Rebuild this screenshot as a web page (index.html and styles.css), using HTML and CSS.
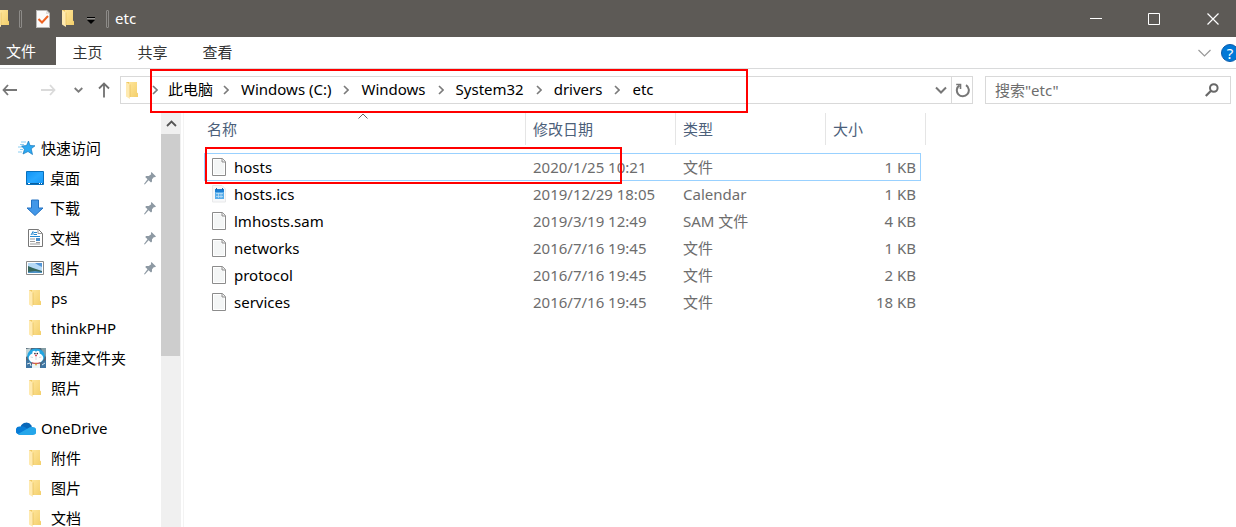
FILE: index.html
```
<!DOCTYPE html>
<html lang="zh-CN">
<head>
<meta charset="utf-8">
<title>etc</title>
<link rel="stylesheet" href="styles.css">
</head>
<body>
<svg class="defs" aria-hidden="true">
  <defs>
    <linearGradient id="gold" x1="0" y1="0" x2="1" y2="1"><stop offset="0" stop-color="#ffe59a"/><stop offset="1" stop-color="#f3cf6b"/></linearGradient>
    <linearGradient id="blue" x1="0" y1="0" x2="1" y2="1"><stop offset="0" stop-color="#0f93f5"/><stop offset=".5" stop-color="#28a8ff"/><stop offset="1" stop-color="#1597f8"/></linearGradient>
    <symbol id="folder" viewBox="0 0 12 17"><path d="M1 0H11V11L12 12V15H4L0 14V0Z" fill="#eec760"/><path d="M3 0H11V10.500L12 11.500V15H3Z" fill="url(#gold)"/><path d="M0 0L4 2.500V17L0 14.500Z" fill="#ffeab0"/><path d="M4 2.500V15" stroke="#e5bd59" stroke-width=".7"/></symbol>
    <symbol id="pin" viewBox="0 0 12 13"><path d="M7.500 0L12 4.500L10.800 5.200L10 4.900L8 7.300L8 9.600L7 10.500L4.600 8.300L.8 12.500L0 12L3.500 7.200L1.200 5L2.200 4L4.800 4.100L7.200 2.200L6.900 1Z" fill="#8d99a3"/></symbol>
    <symbol id="file" viewBox="0 0 14 18"><path d="M.5.5H10.500L13.500 3.500V17.500H.5Z" fill="#fff" stroke="#8c8c8c"/><path d="M2 2H9.500V5H12V16H2Z" fill="#f4f6f6"/><path d="M10 .5V4H13.500" fill="#eee" stroke="#8c8c8c"/></symbol>
    <symbol id="next" viewBox="0 0 6 10"><path d="M1 1L5 5L1 9" fill="none" stroke="#7b7b7b" stroke-width="1.600"/></symbol>
    <symbol id="down" viewBox="0 0 12 8"><path d="M1 1.500L6 6.500L11 1.500" fill="none" stroke="currentColor" stroke-width="2"/></symbol>
  </defs>
</svg>
<div class="window">
  <header class="titlebar">
    <svg class="folder-cut" viewBox="3 0 9 17"><use href="#folder" width="12" height="17"/></svg>
    <span class="grip"></span>
    <button class="tool check" aria-label="属性"><svg width="14" height="18" viewBox="0 0 14 18"><path d="M0 0H11L14 3V18H0Z" fill="#b9b7b5"/><path d="M1 1H10.500L13 3.500V17H1Z" fill="#fbfbfb"/><path d="M10 1V4H13" fill="#ddd"/><path d="M2.500 9L6 12.500L12 6" fill="none" stroke="#ee6424" stroke-width="2"/></svg></button>
    <button class="tool new" aria-label="新建文件夹"><svg width="12" height="17"><use href="#folder"/></svg></button>
    <button class="tool more" aria-label="自定义"><svg width="8" height="7" viewBox="0 0 8 7"><path d="M0 .5H8" stroke="#000"/><path d="M0 1.500H8" stroke="#bbb" stroke-width=".6"/><path d="M0 3H8L4 7Z" fill="#000"/></svg></button>
    <span class="grip"></span>
    <span class="title">etc</span>
    <div class="controls">
      <button aria-label="最小化"><svg width="12" height="12" viewBox="0 0 12 12"><path d="M0 5.500H12" stroke="#fff"/></svg></button>
      <button aria-label="最大化"><svg width="12" height="12" viewBox="0 0 12 12"><path d="M.5.5H11.500V11.500H.5Z" fill="none" stroke="#fff"/></svg></button>
      <button aria-label="关闭"><svg width="12" height="12" viewBox="0 0 12 12"><path d="M.5.5L11.500 11.500M11.500.5L.5 11.500" stroke="#fff" stroke-width="1.200"/></svg></button>
    </div>
  </header>
  <nav class="ribbon" aria-label="功能区">
    <button class="tab active">文件</button>
    <button class="tab">主页</button>
    <button class="tab">共享</button>
    <button class="tab">查看</button>
    <div class="ribbon-end">
      <button aria-label="展开功能区"><svg width="13" height="8" viewBox="0 0 13 8"><path d="M.5 1L6.500 7L12.500 1" fill="none" stroke="#999" stroke-width="1.200"/></svg></button>
      <button class="help" aria-label="帮助">?</button>
    </div>
  </nav>
  <div class="navbar">
    <div class="history">
      <button aria-label="后退"><svg width="16" height="12" viewBox="0 0 16 12"><path d="M6 1L1.500 6L6 11M1.500 6H15" fill="none" stroke="#777" stroke-width="1.800"/></svg></button>
      <button aria-label="前进"><svg width="16" height="12" viewBox="0 0 16 12"><path d="M10 1L14.500 6L10 11M14.500 6H1" fill="none" stroke="#dadada" stroke-width="1.800"/></svg></button>
      <button class="recent" aria-label="最近的位置"><svg width="9" height="6" viewBox="0 0 9 6"><path d="M.7 1L4.500 4.700L8.300 1" fill="none" stroke="#7b7b7b" stroke-width="1.800"/></svg></button>
      <button aria-label="上移"><svg width="12" height="16" viewBox="0 0 12 16"><path d="M1 6.500L6 1.500L11 6.500M6 1.500V15.500" fill="none" stroke="#707070" stroke-width="1.800"/></svg></button>
    </div>
    <div class="address">
      <svg class="addr-folder" width="12" height="17"><use href="#folder"/></svg>
      <svg width="6" height="10"><use href="#next"/></svg>
      <a class="first" href="#pc">此电脑</a><svg width="6" height="10"><use href="#next"/></svg>
      <a href="#c">Windows (C:)</a><svg width="6" height="10"><use href="#next"/></svg>
      <a href="#windows">Windows</a><svg width="6" height="10"><use href="#next"/></svg>
      <a href="#system32">System32</a><svg width="6" height="10"><use href="#next"/></svg>
      <a href="#drivers">drivers</a><svg width="6" height="10"><use href="#next"/></svg>
      <a href="#etc">etc</a>
      <div class="address-end">
        <button class="drop" aria-label="以前的位置"><svg width="12" height="8"><use href="#down"/></svg></button>
        <button class="refresh" aria-label="刷新"><svg width="15" height="15" viewBox="0 0 15 15"><path d="M11 2.200A6 6 0 1 1 4.500 2.300" fill="none" stroke="#777" stroke-width="2"/><path d="M1.200 1.500H5.500V6" fill="none" stroke="#777" stroke-width="1.600"/></svg></button>
      </div>
      <span class="mark mark-path"></span>
    </div>
    <form class="search">
      <input type="text" aria-label="搜索" placeholder='搜索"etc"'>
      <button type="button" aria-label="搜索"><svg width="14" height="14" viewBox="0 0 14 14"><circle cx="8.800" cy="5" r="3.800" fill="none" stroke="#686868" stroke-width="2"/><path d="M6 7.800L.8 13" stroke="#686868" stroke-width="2.200"/></svg></button>
    </form>
  </div>
  <div class="content">
    <nav class="sidebar" aria-label="导航窗格">
      <a class="root" href="#quick"><svg width="18" height="16" viewBox="0 0 18 16"><path d="M10.500 1L12 5.500L17 5.800L13.200 8.800L14.500 14.500L10 11.500L5 14L6.500 9.200L3.500 6L8.500 5.600Z" fill="#2da9f2" stroke="#1579bd" stroke-width=".7"/><path d="M3 2H8M2 4.500H6M0 7H4M2 9.500H5M0 12H4" stroke="#6cc2ef" stroke-width=".8"/></svg>快速访问</a>
      <a href="#desktop"><svg width="18" height="14" viewBox="0 0 18 14"><path d="M.5.5H17.500V13.500H.5Z" fill="url(#blue)" stroke="#0870bd"/><path d="M1 12.500H17" stroke="#075f9f"/><path d="M2 12.500H4M13 12.500H14M15 12.500H16" stroke="#fff"/></svg>桌面<svg class="pin"><use href="#pin"/></svg></a>
      <a href="#downloads"><svg width="18" height="18" viewBox="0 0 18 18"><path d="M5.500 1H12.500V9H17L9 16.500L1 9H5.500Z" fill="#4297e8" stroke="#2472c2"/></svg>下载<svg class="pin"><use href="#pin"/></svg></a>
      <a href="#documents"><svg width="18" height="18" viewBox="0 0 18 18"><path d="M2.500.5H12.500L16.500 4.500V17.500H2.500Z" fill="#fff" stroke="#777"/><path d="M12 .5V4.500H16.500" fill="none" stroke="#999"/><path d="M4 7.500H14M8 5.500H11M8 3.500H11M5 6L7 2.500V6" fill="none" stroke="#2688cf"/><path d="M4 10H9M4 12.500H9M4 15H14M10 13.500H14" stroke="#999"/><path d="M10 9H14V12H10Z" fill="#468dcc"/></svg>文档<svg class="pin"><use href="#pin"/></svg></a>
      <a href="#pictures"><svg width="18" height="14" viewBox="0 0 18 14"><path d="M.5.5H17.500V13.500H.5Z" fill="#fff" stroke="#8a8a8a"/><path d="M2 2H16V12H2Z" fill="#b6daf7"/><path d="M9 2H16V6L12 4Z" fill="#5496d8"/><path d="M2 5L7 7L16 10V12H2Z" fill="#36665b"/><path d="M2 11L9 10L16 11V12H2Z" fill="#4f93c7"/></svg>图片<svg class="pin"><use href="#pin"/></svg></a>
      <a href="#ps"><svg class="folder"><use href="#folder"/></svg>ps</a>
      <a href="#thinkphp"><svg class="folder"><use href="#folder"/></svg>thinkPHP</a>
      <a class="photo" href="#new"><svg width="20" height="20" viewBox="0 0 20 20"><path d="M0 0H20V20H0Z" fill="#526577"/><path d="M0 1L5 0L3 7L0 9Z" fill="#c3d3d4"/><path d="M15 0H20V9L17 6Z" fill="#829da5"/><path d="M0 12L4 13L7 20H0ZM16 14L20 12V20H14Z" fill="#3f76a3"/><ellipse cx="10" cy="8" rx="8.800" ry="7.500" fill="#22a5e2"/><ellipse cx="10" cy="10" rx="7.300" ry="5.200" fill="#fff"/><ellipse cx="8.200" cy="5" rx="1.900" ry="2.300" fill="#fff"/><ellipse cx="11.800" cy="5" rx="1.900" ry="2.300" fill="#fff"/><circle cx="8.900" cy="5.600" r=".8" fill="#223"/><circle cx="11.300" cy="5.600" r=".8" fill="#223"/><circle cx="10" cy="7.400" r=".9" fill="#d52732"/><path d="M10 8.500V12M4.500 9L7 9.500M15.500 9L13 9.500" fill="none" stroke="#8da5ae" stroke-width=".4"/><path d="M6 15.500H14L14 20H6Z" fill="#e9f4f7"/><path d="M6 14.800Q10 16 14 14.800" fill="none" stroke="#d34142" stroke-width="1.200"/><circle cx="10" cy="16.500" r="1" fill="#d9b43c"/><path d="M1 16L4 15L5 18M16 17L19 15" fill="none" stroke="#dce9ed"/></svg>新建文件夹</a>
      <a href="#photos"><svg class="folder"><use href="#folder"/></svg>照片</a>
      <a class="root cloud" href="#onedrive"><svg width="20" height="13" viewBox="0 0 20 13"><path d="M4.500 4.500A6.200 6.200 0 0 1 15.500 3.500L16 6L10 8Z" fill="#0967b8"/><path d="M3 12.500A4 4 0 0 1 4.500 4.500Q7 3.500 9.500 5.500L16 9.500L12 13H4Z" fill="#087cd6"/><path d="M2 12L12.500 6Q14 4.600 16 5A4 4 0 0 1 17 13H4Q2.500 13 2 12Z" fill="#25a6ea"/></svg>OneDrive</a>
      <a href="#attachments"><svg class="folder"><use href="#folder"/></svg>附件</a>
      <a href="#od-pictures"><svg class="folder"><use href="#folder"/></svg>图片</a>
      <a href="#od-documents"><svg class="folder"><use href="#folder"/></svg>文档</a>
    </nav>
    <div class="scrollbar"><button aria-label="向上滚动"><svg width="11" height="7" viewBox="0 0 11 7"><path d="M1 6L5.500 1.500L10 6" fill="none" stroke="#555" stroke-width="1.800"/></svg></button><div class="thumb"></div></div>
    <main class="files">
      <table>
        <colgroup><col class="c-name"><col class="c-date"><col class="c-type"><col class="c-size"></colgroup>
        <thead><tr><th>名称<svg class="sort" width="10" height="6" viewBox="0 0 10 6"><path d="M.5 5.500L5 1L9.500 5.500" fill="none" stroke="#666"/></svg></th><th>修改日期</th><th>类型</th><th>大小</th></tr></thead>
        <tbody>
          <tr class="selected"><td><div class="name"><svg class="file"><use href="#file"/></svg>hosts</div></td><td>2020/1/25 10:21</td><td>文件</td><td>1 KB</td></tr>
          <tr><td><div class="name"><svg class="file" viewBox="0 0 14 18"><path d="M.5.5H10L13.500 4V17H.5Z" fill="#f7f8f9" stroke="#e8e9ea"/><path d="M3 4H12V14H3Z" fill="#5aaeea"/><path d="M3 4H12V7H3Z" fill="#1c7fd2"/><path d="M4.500 3V5M10.500 3V5" stroke="#1767b0"/><path d="M4 8.500H11M4 11.500H11M6.500 8V13M9 8V13" stroke="#c4e3f8" stroke-width=".7"/></svg>hosts.ics</div></td><td>2019/12/29 18:05</td><td>Calendar</td><td>1 KB</td></tr>
          <tr><td><div class="name"><svg class="file"><use href="#file"/></svg>lmhosts.sam</div></td><td>2019/3/19 12:49</td><td>SAM 文件</td><td>4 KB</td></tr>
          <tr><td><div class="name"><svg class="file"><use href="#file"/></svg>networks</div></td><td>2016/7/16 19:45</td><td>文件</td><td>1 KB</td></tr>
          <tr><td><div class="name"><svg class="file"><use href="#file"/></svg>protocol</div></td><td>2016/7/16 19:45</td><td>文件</td><td>2 KB</td></tr>
          <tr><td><div class="name"><svg class="file"><use href="#file"/></svg>services</div></td><td>2016/7/16 19:45</td><td>文件</td><td>18 KB</td></tr>
        </tbody>
      </table>
      <span class="mark mark-hosts"></span>
    </main>
  </div>
</div>
</body>
</html>
```
FILE: styles.css
```
* { box-sizing: border-box; }
body {
  margin: 0;
  background: #fff;
  color: #000;
  font: 15px/20px "Noto Sans", "Noto Sans CJK SC", sans-serif;
}
.defs { position: absolute; width: 0; height: 0; }
svg { display: block; flex: none; }
button { border: 0; padding: 0; margin: 0; background: none; font: inherit; color: inherit; display: flex; align-items: center; justify-content: center; }
a { color: inherit; text-decoration: none; white-space: nowrap; }
.window { display: flex; flex-direction: column; height: 100vh; overflow: hidden; }

.titlebar { display: flex; align-items: center; height: 37px; flex: none; background: #5d5a56; color: #fff; }
.folder-cut { width: 9px; height: 17px; }
.grip { width: 3px; height: 18px; margin-left: 10px; border: 1px solid #8d8b88; border-radius: 1px; }
.tool { height: 36px; }
.check { margin-left: 14px; }
.new { margin-left: 12px; }
.more { margin-left: 13px; padding-top: 4px; }
.title { margin-left: 6px; padding-bottom: 2px; }
.more + .grip { margin-left: 11px; }
.controls { display: flex; margin-left: auto; }
.controls button { width: 58px; height: 36px; padding-left: 14px; }
.controls button:last-child { width: 60px; }

.ribbon { display: flex; height: 32px; flex: none; border-bottom: 1px solid #d9dadb; }
.tab { width: 65px; height: 30px; padding-right: 2px; color: #333; }
.tab.active { width: 56px; height: 28px; padding-right: 14px; background: #5d5a56; color: #fff; }
.ribbon-end { display: flex; align-items: center; gap: 10px; margin-left: auto; overflow: hidden; }
.help { width: 18px; height: 18px; margin-right: -3px; border-radius: 50%; border: 1px solid #0b5cab; background: #0078d7; color: #fff; }

.navbar { display: flex; height: 44px; padding: 7px 5px 9px 2px; flex: none; }
.history { display: flex; width: 118px; align-items: center; }
.history button:nth-child(2) { margin-left: 22px; }
.history button:nth-child(3) { margin-left: 18px; }
.history button:nth-child(4) { margin-left: 15px; }
.address { position: relative; display: flex; flex: 1; align-items: center; border: 1px solid #d9d9d9; padding-left: 5px; margin-right: 12px; }
.address a { margin: 0 12px; padding-bottom: 2px; }
.address .first { margin: 0 10px; }
.addr-folder { margin-right: 14px; }
.address-end { display: flex; height: 100%; margin-left: auto; }
.drop { width: 20px; color: #777; }
.refresh { width: 21px; border-left: 1px solid #d9d9d9; }
.search { display: flex; width: 246px; border: 1px solid #d9d9d9; }
.search input { flex: 1; min-width: 0; border: 0; padding: 0 9px; font: inherit; outline: 0; background: none; }
.search input::placeholder { color: #6d6d6d; opacity: 1; }
.search button { width: 36px; }
.mark { position: absolute; border: 2px solid #ff0000; pointer-events: none; }
.mark-path { left: 29px; top: -8px; width: 598px; height: 44px; }

.content { display: flex; flex: 1; min-height: 0; }
.sidebar { width: 161px; padding: 20px 5px 0 26px; overflow: hidden; flex: none; }
.sidebar a { display: flex; align-items: center; height: 30px; gap: 6px; }
.sidebar .root { margin-left: -8px; gap: 5px; }
.sidebar .cloud { margin-top: 10px; margin-left: -10px; gap: 5px; }
.sidebar .photo { gap: 5px; }
.folder { width: 12px; height: 17px; margin: 0 4px 0 3px; }
.pin { width: 12px; height: 13px; margin-left: auto; }
.scrollbar { width: 20px; background: #f0f0f0; flex: none; }
.scrollbar button { width: 100%; height: 21px; }
.thumb { height: 222px; margin-right: 1px; background: #cdcdcd; }

.files { position: relative; flex: 1; margin-left: 2px; padding-left: 16px; border-left: 1px solid #f3f3f3; }
table { table-layout: fixed; width: 726px; border-collapse: separate; border-spacing: 0; }
.c-name { width: 326px; }
.c-date, .c-type { width: 150px; }
.c-size { width: 100px; }
th { position: relative; height: 32px; padding: 0 7px; border-right: 1px solid #e5e5e5; text-align: left; font-weight: 400; color: #4c607a; }
thead::after { content: ""; display: block; height: 8px; }
td { height: 27px; padding: 0 7px; color: #6d6d6d; }
td:last-child { padding-right: 10px; text-align: right; }
.name { display: flex; align-items: center; gap: 8px; padding-left: 5px; color: #000; }
.file { width: 14px; height: 18px; }
.sort { position: absolute; top: 0; left: 158px; }
.selected { position: relative; }
.selected::after { content: ""; position: absolute; inset: 0 5px -1px 4px; border: 1px solid #99d1ff; }
.mark-hosts { left: 21px; top: 34px; width: 417px; height: 37px; }
```
